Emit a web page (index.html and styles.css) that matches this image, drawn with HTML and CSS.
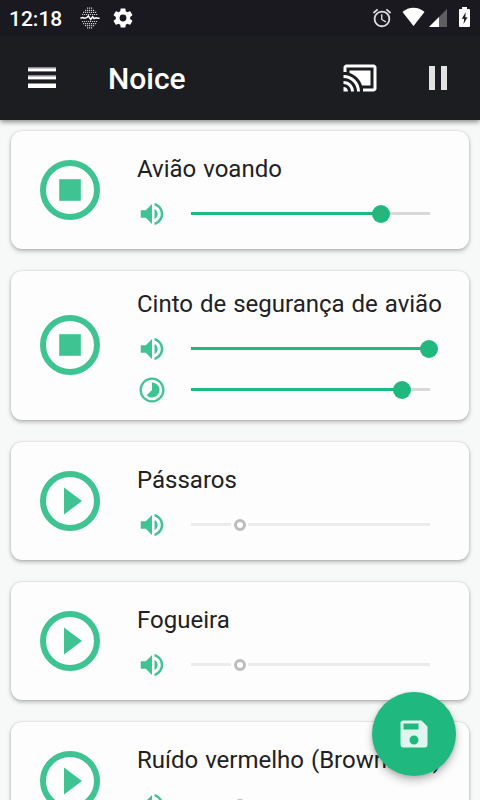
FILE: index.html
```html
<!DOCTYPE html>
<html lang="pt">
<head>
<meta charset="utf-8">
<title>Noice</title>
<link rel="stylesheet" href="styles.css">
</head>
<body>
<svg class="defs" width="0" height="0">
  <defs>
    <symbol id="stop" viewBox="0 0 24 24"><circle cx="12" cy="12" r="9" fill="none" stroke="currentColor" stroke-width="2"/><path d="M8.4 8.4h7.2v7.2H8.4z"/></symbol>
    <symbol id="play" viewBox="0 0 24 24"><circle cx="12" cy="12" r="9" fill="none" stroke="currentColor" stroke-width="2"/><path d="M10 16.5l6-4.5-6-4.5z"/></symbol>
    <symbol id="volume" viewBox="0 0 24 24"><path d="M3 9v6h4l5 5V4L7 9H3zm13.500 3c0-1.770-1.020-3.290-2.500-4.030v8.050c1.480-.730 2.500-2.250 2.500-4.020zM14 3.230v2.060c2.890.860 5 3.540 5 6.710s-2.110 5.850-5 6.710v2.060c4.010-.910 7-4.490 7-8.770s-2.990-7.860-7-8.770z"/></symbol>
    <symbol id="interval" viewBox="0 0 24 24"><circle cx="12" cy="12" r="9.100" fill="none" stroke="currentColor" stroke-width="1.800"/><path d="M12 6v6l-4.240 4.240A6 6 0 1 0 12 6z"/></symbol>
  </defs>
</svg>
<div class="screen">
  <div class="statusbar">
    <span class="clock">12:18</span>
    <svg class="wave-icon" width="20" height="22" viewBox="0 0 20 22">
      <g fill="none" stroke="#c9c9cc" stroke-width="1.200" stroke-dasharray="1.200 .8">
        <path d="M7 1.200h6M5 3.300h10M3 5.400h14M2 7.500h16M2 14.500h16M3 16.600h14M5 18.700h10M7 20.800h6"/>
      </g>
      <path d="M.5 11.200l2-.7 2 .8 2.200-.6 1.600-1.700 2.500 3.500 1.800-2.800 1.500 1.800 2-.8 1.500.6h2" fill="none" stroke="#fff" stroke-width="1.500"/>
    </svg>
    <svg class="gear-icon" width="24" height="24" viewBox="0 0 24 24" fill="#fff"><path d="M19.140 12.940c.040-.300.060-.610.060-.940s-.020-.640-.070-.940l2.030-1.580c.180-.140.230-.410.120-.610l-1.920-3.320c-.120-.220-.370-.290-.590-.220l-2.390.960c-.500-.380-1.030-.700-1.620-.940l-.360-2.540c-.040-.240-.240-.410-.480-.410h-3.840c-.240 0-.430.170-.470.410l-.360 2.540c-.590.240-1.130.570-1.620.940l-2.390-.960c-.220-.080-.470 0-.590.220L2.740 8.870c-.120.210-.080.470.120.610l2.030 1.580c-.050.300-.090.630-.090.940s.020.640.070.940l-2.030 1.580c-.180.140-.230.410-.120.610l1.920 3.320c.120.220.370.290.590.220l2.390-.960c.500.380 1.030.700 1.620.940l.360 2.540c.050.240.240.410.480.410h3.840c.240 0 .440-.170.470-.410l.360-2.540c.590-.240 1.130-.560 1.620-.940l2.390.960c.220.080.470 0 .590-.220l1.920-3.320c.120-.220.070-.470-.120-.610l-2.010-1.580zM12 15.400a3.400 3.400 0 1 1 0-6.800 3.400 3.400 0 0 1 0 6.800z"/></svg>
    <span class="spacer"></span>
    <svg class="alarm-icon" width="22" height="22" viewBox="0 0 24 24" fill="#dcdcde"><path d="M22 5.720l-4.600-3.860-1.290 1.530 4.600 3.860L22 5.720zM7.880 3.390L6.600 1.860 2 5.710l1.290 1.530 4.590-3.850zM12.500 8H11v6l4.750 2.850.750-1.230-4-2.370V8zM12 4c-4.970 0-9 4.030-9 9s4.020 9 9 9a9 9 0 1 0 0-18zm0 16c-3.870 0-7-3.130-7-7s3.130-7 7-7 7 3.130 7 7-3.130 7-7 7z"/></svg>
    <svg class="wifi-icon" width="23" height="20" viewBox="0 0 23 20"><path d="M.5 5C6.500-.7 16.500-.7 22.500 5L11.500 19z" fill="#fff"/></svg>
    <svg class="cell-icon" width="18" height="18" viewBox="0 0 18 18"><path d="M18 0v18H0z" fill="#5f5e63"/><path d="M10 8v10H0z" fill="#fff"/></svg>
    <svg class="battery-icon" width="11" height="20" viewBox="0 0 11 20"><path d="M3 0h5v2h2q1 0 1 1v16q0 1-1 1H1q-1 0-1-1V3q0-1 1-1h2z" fill="#fff"/><path d="M6.800 5L2.800 11.700h2.400L4.500 17l4-6.700H6.200z" fill="#1a191f"/></svg>
  </div>
  <header class="appbar">
    <div class="menu"><i></i><i></i><i class="solid"></i></div>
    <h1>Noice</h1>
    <svg class="cast" width="36" height="36" viewBox="0 0 24 24" fill="#fff"><path d="M1 18v3h3c0-1.660-1.340-3-3-3zm0-4v2c2.760 0 5 2.240 5 5h2c0-3.870-3.130-7-7-7zm18-7H5v1.630c3.960 1.280 7.090 4.410 8.370 8.370H19V7zM1 10v2a9 9 0 0 1 9 9h2c0-6.080-4.930-11-11-11zm20-7H3c-1.100 0-2 .9-2 2v3h2V5h18v14h-7v2h7c1.100 0 2-.9 2-2V5c0-1.100-.9-2-2-2z"/></svg>
    <div class="pause"><i></i><i></i></div>
  </header>
  <main class="list">
    <section class="card">
      <svg class="action"><use href="#stop"/></svg>
      <div class="content">
        <h2>Avião voando</h2>
        <div class="row"><svg class="glyph"><use href="#volume"/></svg><div class="slider"><div class="fill" style="width:190px"></div><div class="thumb"></div><div class="rest"></div></div></div>
      </div>
    </section>
    <section class="card tall">
      <svg class="action"><use href="#stop"/></svg>
      <div class="content">
        <h2>Cinto de segurança de avião</h2>
        <div class="row"><svg class="glyph"><use href="#volume"/></svg><div class="slider"><div class="fill" style="width:238px"></div><div class="thumb"></div><div class="rest"></div></div></div>
        <div class="row"><svg class="glyph"><use href="#interval"/></svg><div class="slider"><div class="fill" style="width:211px"></div><div class="thumb"></div><div class="rest"></div></div></div>
      </div>
    </section>
    <section class="card">
      <svg class="action"><use href="#play"/></svg>
      <div class="content">
        <h2>Pássaros</h2>
        <div class="row"><svg class="glyph"><use href="#volume"/></svg><div class="slider off"><div class="fill"></div><div class="thumb"></div><div class="rest"></div></div></div>
      </div>
    </section>
    <section class="card">
      <svg class="action"><use href="#play"/></svg>
      <div class="content">
        <h2>Fogueira</h2>
        <div class="row"><svg class="glyph"><use href="#volume"/></svg><div class="slider off"><div class="fill"></div><div class="thumb"></div><div class="rest"></div></div></div>
      </div>
    </section>
    <section class="card">
      <svg class="action"><use href="#play"/></svg>
      <div class="content">
        <h2>Ruído vermelho (Browniano)</h2>
        <div class="row"><svg class="glyph"><use href="#volume"/></svg><div class="slider off"><div class="fill"></div><div class="thumb"></div><div class="rest"></div></div></div>
      </div>
    </section>
  </main>
  <div class="fab"><svg width="36" height="36" viewBox="0 0 24 24"><path fill-rule="evenodd" d="M17 3H5a2 2 0 0 0-2 2v14a2 2 0 0 0 2 2h14a2 2 0 0 0 2-2V7l-4-4zM12 19a3 3 0 1 1 0-6 3 3 0 0 1 0 6zM15 9H5V5h10v4z"/></svg></div>
</div>
</body>
</html>
```

FILE: styles.css
```css
* { box-sizing: border-box; }
body { margin: 0; font-family: Roboto, "Liberation Sans", sans-serif; }
svg { display: block; flex: none; }
.defs { position: absolute; }
.screen {
  position: relative;
  width: 480px;
  height: 800px;
  overflow: hidden;
  display: flex;
  flex-direction: column;
  background: #f7f9f8;
}
.statusbar {
  flex: none;
  height: 36px;
  display: flex;
  align-items: center;
  padding: 0 10px 0 9px;
  background: #1a191f;
  color: #fff;
}
.clock { width: 71px; font-size: 21px; font-weight: 500; line-height: 36px; padding-top: 1px; }
.gear-icon { margin-left: 11px; }
.spacer { flex: 1; }
.wifi-icon { margin: -3px 4px 0 9px; }
.battery-icon { margin: -2px 0 0 12px; }
.appbar {
  flex: none;
  z-index: 1;
  height: 84px;
  display: flex;
  align-items: center;
  padding: 0 33px 0 28px;
  background: #1c1d21;
  color: #fff;
  box-shadow: 0 2px 5px rgba(0, 0, 0, .45);
}
.menu { width: 28px; height: 21px; margin-top: -1px; display: flex; flex-direction: column; justify-content: space-between; }
.menu i { height: 5px; background: linear-gradient(#8b8b8e 1px, #c4c4c6 1px 2px, #fff 2px 4px, #77777a 4px); }
.menu .solid { background: linear-gradient(#8b8b8e 1px, #fff 1px); }
.appbar h1 { flex: 1; margin: 0 0 0 52px; padding-top: 2px; font-size: 30px; font-weight: 500; line-height: 36px; }
.pause { display: flex; gap: 6px; margin-left: 51px; }
.pause i { width: 6px; height: 24px; background: #e2e2e2; }
.list { display: flex; flex-direction: column; gap: 22px; padding: 11px; }
.card {
  flex: none;
  display: flex;
  align-items: center;
  height: 118px;
  padding-left: 23px;
  border-radius: 11px;
  background: #fdfdfd;
  box-shadow: 0 2px 4px rgba(0, 0, 0, .28), 0 0 2px rgba(0, 0, 0, .15);
}
.card.tall { height: 149px; }
.action { width: 72px; height: 72px; color: #3fc393; fill: currentColor; }
.tall .action { margin-bottom: 1px; }
.content { margin-left: 31px; }
.card h2 { margin: 0; font-size: 24px; font-weight: 400; line-height: 47px; word-spacing: 1px; color: #212124; white-space: nowrap; }
.row { height: 41px; display: flex; align-items: center; }
.glyph { width: 30px; height: 30px; color: #3fc393; fill: currentColor; }
.slider { width: 239px; margin-left: 24px; height: 18px; display: flex; align-items: center; }
.fill { flex: none; height: 3px; background: #1fb980; }
.thumb { flex: none; width: 18px; height: 18px; margin: 0 -9px; border-radius: 50%; background: #1fb980; z-index: 1; }
.rest { flex: 1; height: 3px; background: #d9d9d9; }
.off .fill { width: 40px; background: #ececec; }
.off .rest { background: #ececec; }
.off .thumb { width: 12px; height: 12px; margin: 0 2.500px; border: 3px solid #bcbcbc; background: #fdfdfd; }
.fab {
  position: absolute;
  left: 372px;
  top: 692px;
  z-index: 2;
  width: 84px;
  height: 84px;
  border-radius: 50%;
  display: flex;
  align-items: center;
  justify-content: center;
  background: #1fb980;
  fill: #e0f5ed;
  box-shadow: 0 5px 9px rgba(0, 0, 0, .23), 0 1px 4px rgba(0, 0, 0, .15);
}
```
